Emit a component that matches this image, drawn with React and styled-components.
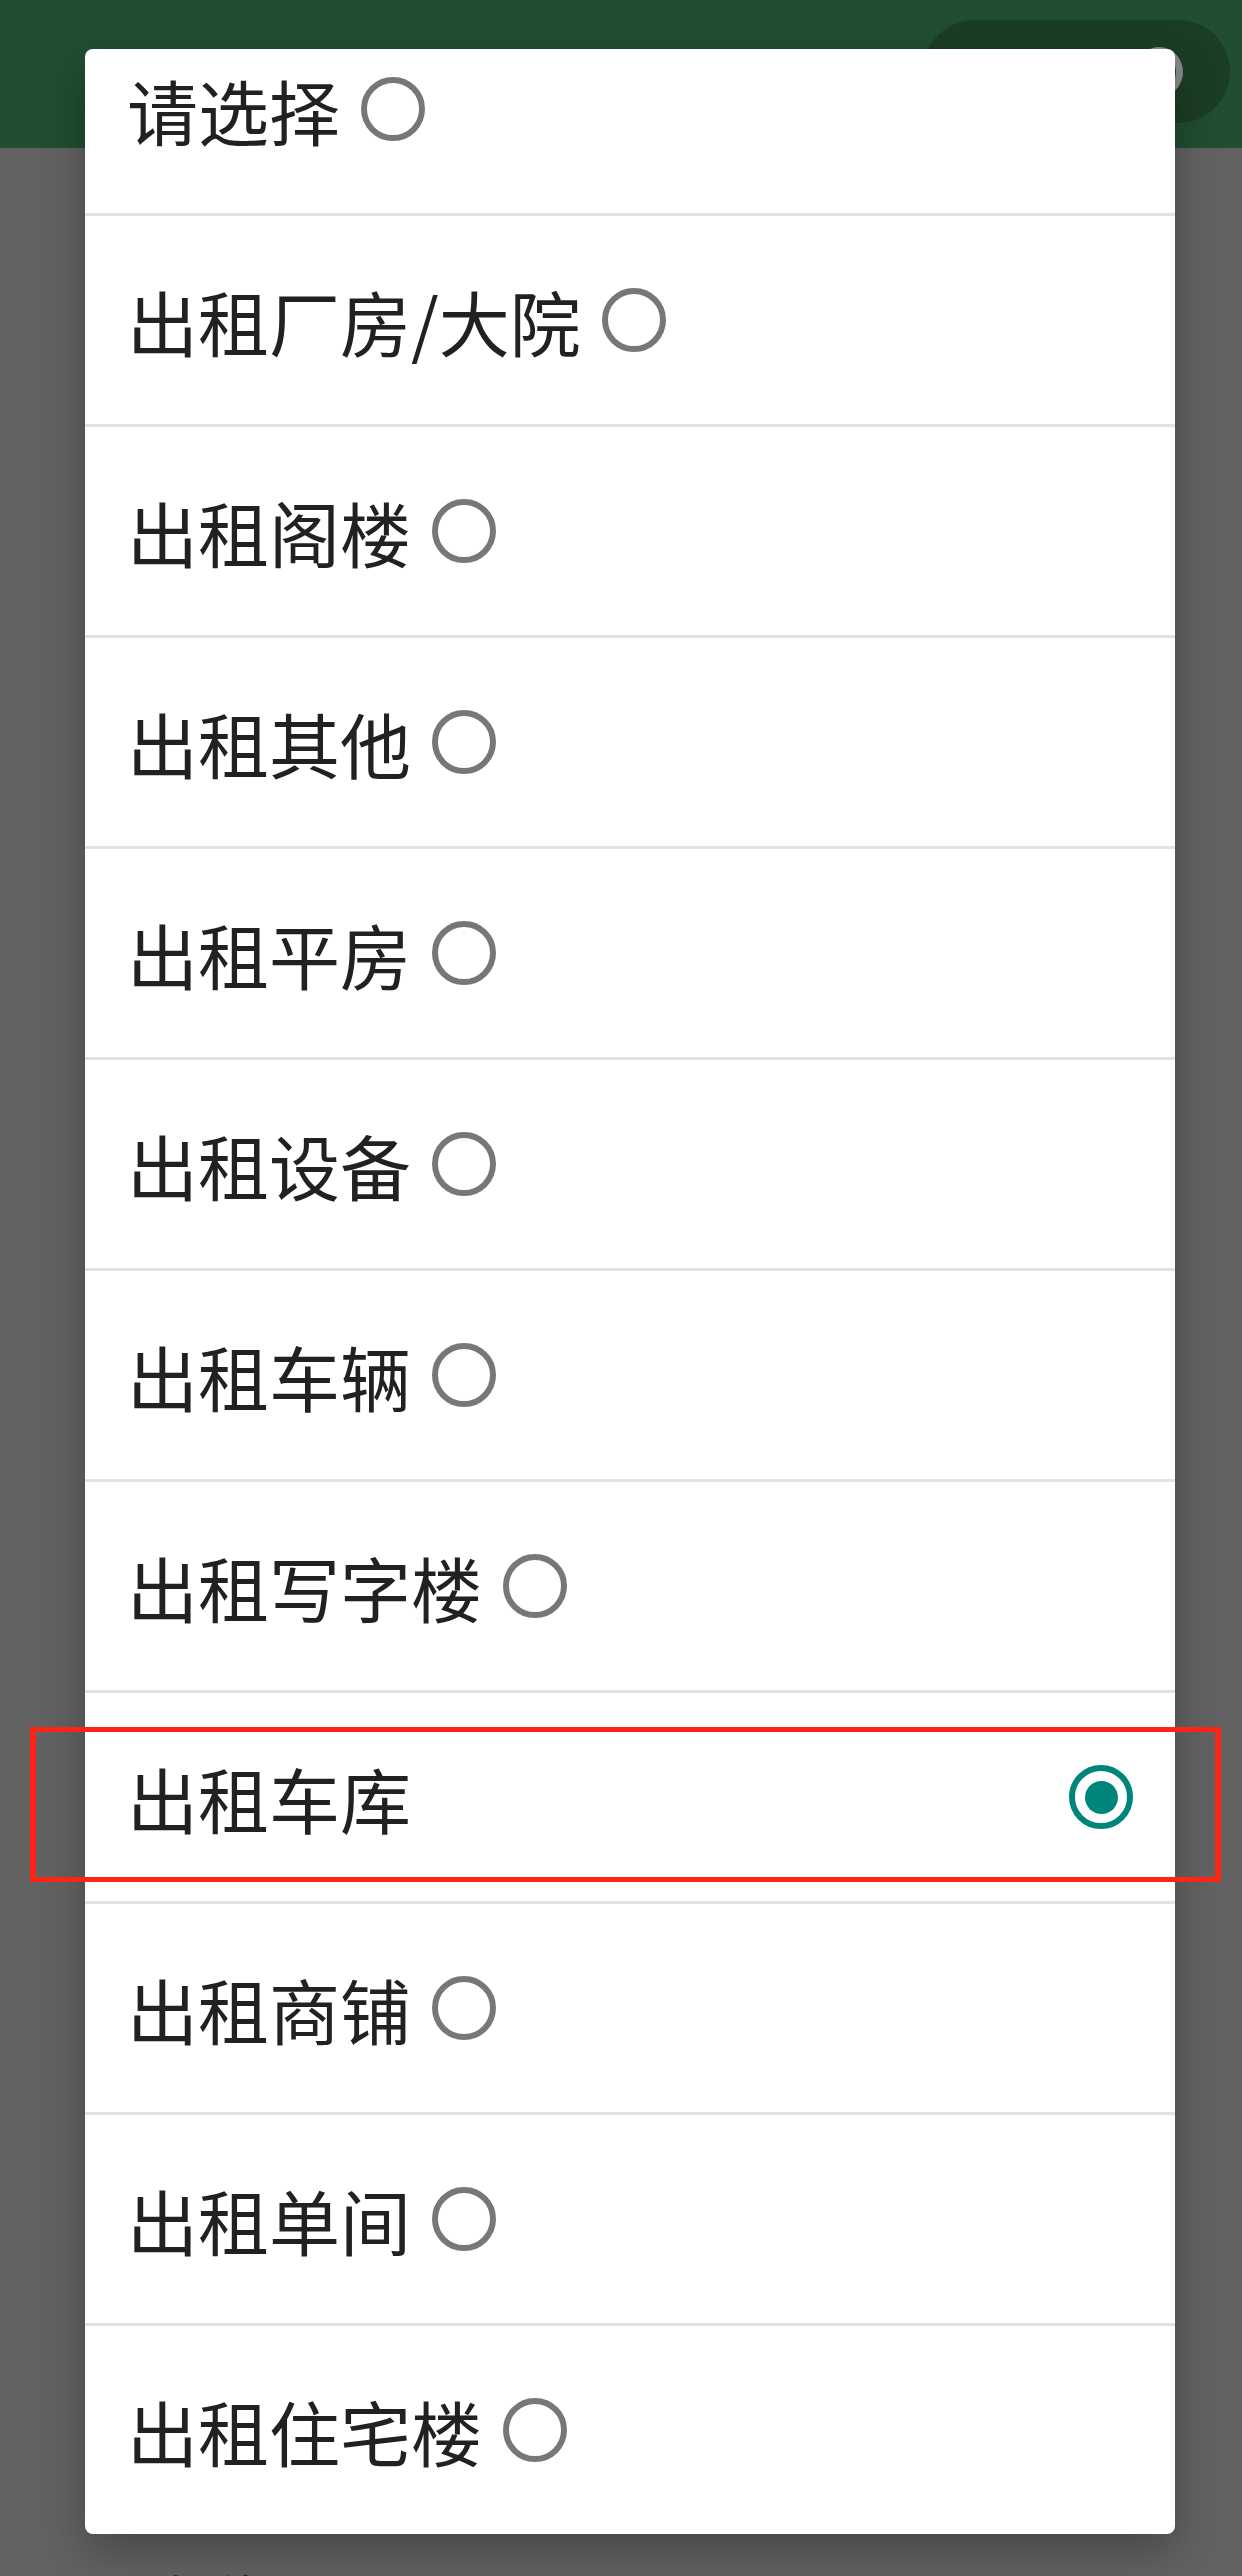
import React from "react";
import styled, { createGlobalStyle } from "styled-components";

const GlobalStyle = createGlobalStyle`
  html, body {
    margin: 0;
    padding: 0;
    background: #626262;
  }
  body {
    font-family: "Noto Sans CJK SC", "Noto Sans", sans-serif;
  }
  * { box-sizing: border-box; }
`;

const Page = styled.div`
  position: relative;
  width: 1242px;
  height: 2576px;
  overflow: hidden;
  display: flex;
  flex-direction: column;
  background: #626262;
`;

const Header = styled.header`
  height: 148px;
  flex: none;
  display: flex;
  align-items: center;
  padding: 0 12px 0 453px;
  background: #214d30;
`;

const Title = styled.h1`
  flex: 1;
  margin: 0;
  font-size: 50px;
  font-weight: 400;
  color: #7d9583;
  line-height: 1;
`;

const SearchPill = styled.div`
  width: 307px;
  height: 103px;
  margin-top: -5px;
  border-radius: 52px;
  background: #1c3d25;
  display: flex;
  align-items: center;
  justify-content: flex-end;
  padding-right: 47px;
`;

const Knob = styled.span`
  width: 48px;
  height: 50px;
  border-radius: 50%;
  border: 7px solid #8a8a8a;
`;

const Body = styled.main`
  flex: 1;
  display: flex;
  flex-direction: column;
  justify-content: flex-end;
  padding: 0 0 0 152px;
`;

const FieldLabel = styled.div`
  font-size: 58px;
  line-height: 1;
  color: #262626;
  margin-bottom: -52px;
`;

const Dialog = styled.div`
  position: absolute;
  left: 85px;
  top: 49px;
  width: 1090px;
  height: 2485px;
  background: #ffffff;
  border-radius: 8px;
  overflow: hidden;
  box-shadow: 0 18px 44px rgba(0, 0, 0, 0.28);
`;

const OptionList = styled.ul`
  list-style: none;
  margin: -44px 0 0 0;
  padding: 0;
`;

const OptionRow = styled.li`
  height: 211px;
  display: flex;
  align-items: center;
  justify-content: ${(p) => (p.$selected ? "space-between" : "flex-start")};
  padding: 0 42px 0 42px;
  border-bottom: 3px solid #e2e2e2;
  &:last-child {
    border-bottom: none;
    height: 208px;
  }
`;

const OptionText = styled.span`
  font-size: 71px;
  line-height: 1;
  color: #212121;
  white-space: nowrap;
`;

const Radio = styled.span`
  position: relative;
  flex: none;
  width: 64px;
  height: 64px;
  margin-left: ${(p) => (p.$checked ? "0" : "21px")};
  border-radius: 50%;
  border: 6px solid ${(p) => (p.$checked ? "#00857a" : "#777777")};
  display: flex;
  align-items: center;
  justify-content: center;
  &::after {
    content: "";
    display: ${(p) => (p.$checked ? "block" : "none")};
    width: 33px;
    height: 33px;
    border-radius: 50%;
    background: #00857a;
  }
`;

const Annotation = styled.div`
  position: absolute;
  left: 30px;
  top: 1727px;
  width: 1191px;
  height: 155px;
  border-style: solid;
  border-color: #ff2414;
  border-width: 5px 6px;
  pointer-events: none;
`;

const options = [
  "请选择",
  "出租厂房/大院",
  "出租阁楼",
  "出租其他",
  "出租平房",
  "出租设备",
  "出租车辆",
  "出租写字楼",
  "出租车库",
  "出租商铺",
  "出租单间",
  "出租住宅楼",
];

const selected = "出租车库";

export default function App() {
  return (
    <>
      <GlobalStyle />
      <Page>
        <Header>
          <Title>发布出租信息</Title>
          <SearchPill>
            <Knob />
          </SearchPill>
        </Header>
        <Body>
          <FieldLabel>车位</FieldLabel>
        </Body>
        <Dialog role="dialog">
          <OptionList>
            {options.map((o) => {
              const isSel = o === selected;
              return (
                <OptionRow key={o} $selected={isSel}>
                  <OptionText>{o}</OptionText>
                  <Radio $checked={isSel} />
                </OptionRow>
              );
            })}
          </OptionList>
        </Dialog>
        <Annotation />
      </Page>
    </>
  );
}
